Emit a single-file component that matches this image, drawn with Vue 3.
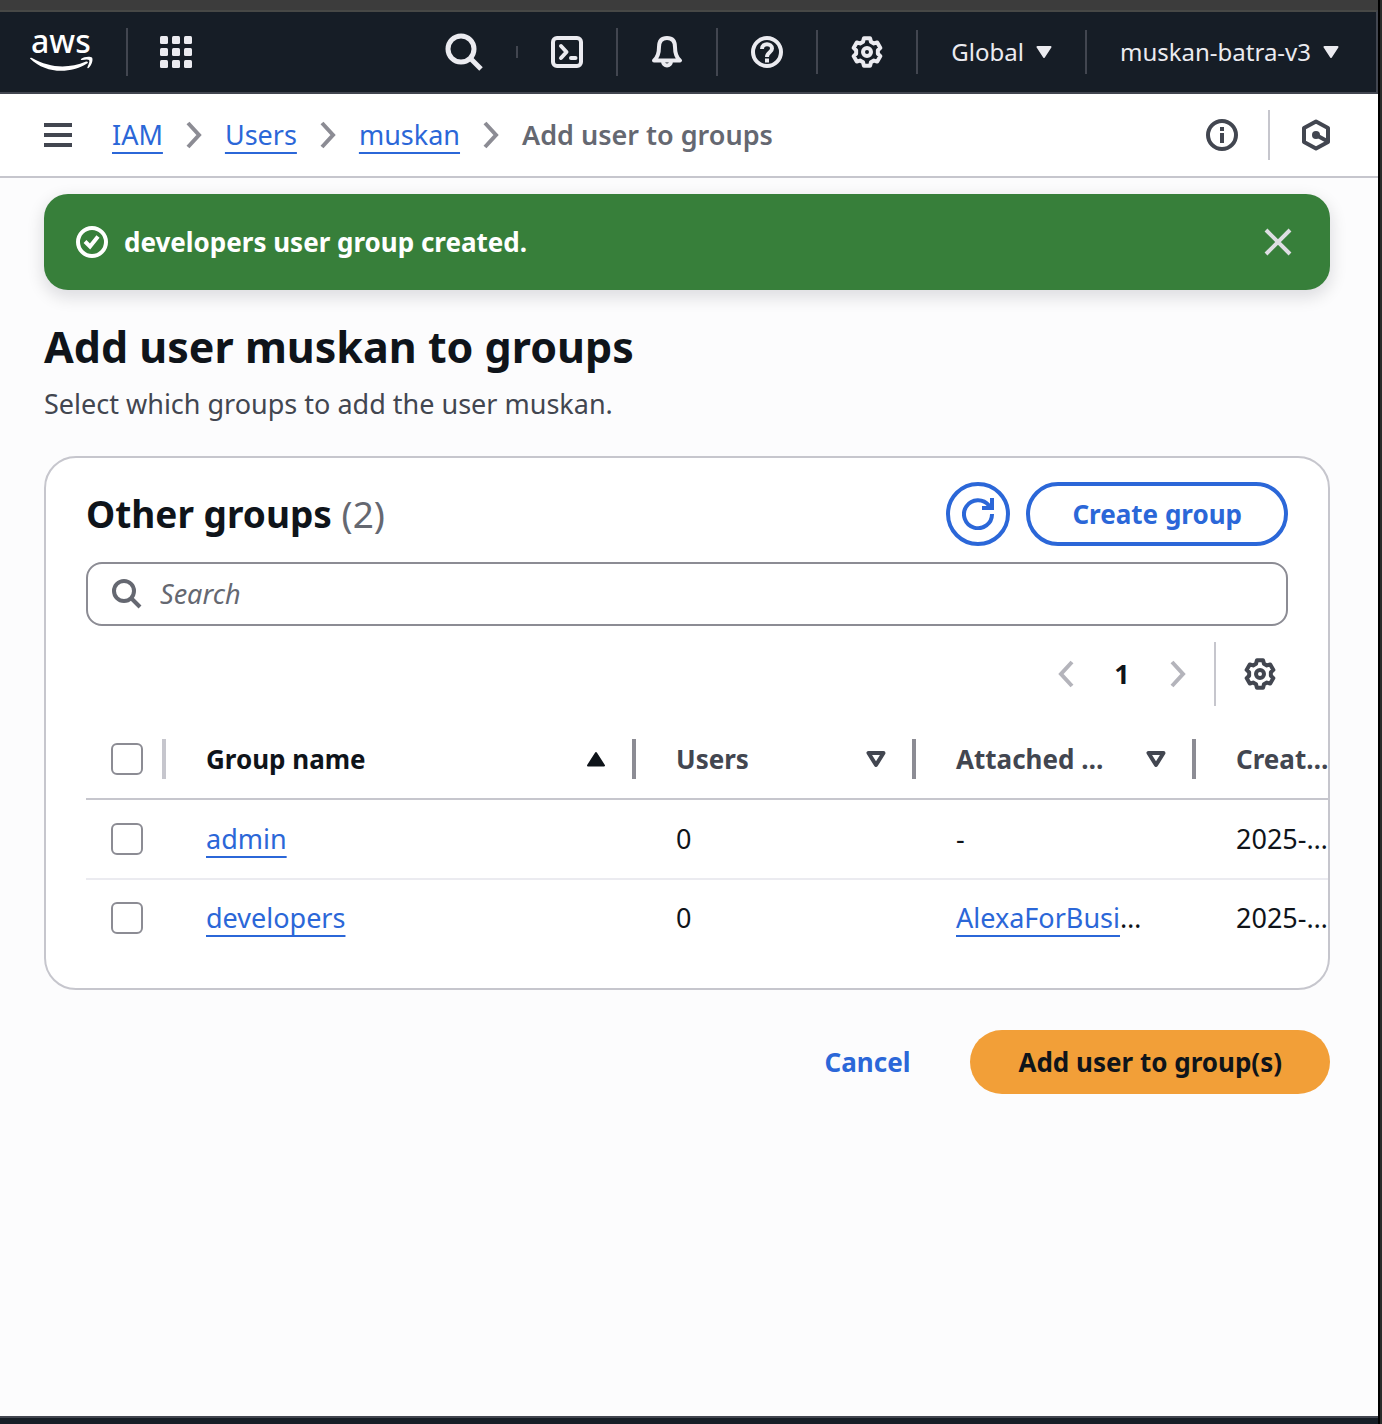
<script setup>
import { ref } from 'vue'

const query = ref('')
const selected = ref([])
const crumbs = ['IAM', 'Users', 'muskan']
const groups = [
  { name: 'admin', users: 0, policy: '', created: '2025-…' },
  { name: 'developers', users: 0, policy: 'AlexaForBusi', created: '2025-…' },
]

// Outline of a six-toothed cog centred on 16,16.
const cog = (() => {
  const points = []
  for (let tooth = 0; tooth < 6; tooth++) {
    const base = tooth * 60 - 90
    for (const [radius, offset] of [[11, -21], [14, -13], [14, 13], [11, 21]]) {
      const angle = ((base + offset) * Math.PI) / 180
      points.push(`${(16 + radius * Math.cos(angle)).toFixed(2)} ${(16 + radius * Math.sin(angle)).toFixed(2)}`)
    }
  }
  return `M${points.join('L')}Z`
})()
</script>

<template>
  <div class="page">
    <header class="topbar">
      <a class="logo" href="#" aria-label="AWS home">
        <svg width="64" height="44" viewBox="0 0 64 44">
          <text x="1" y="23" class="logo-text">aws</text>
          <path d="M0 28.500C0 27.500 1 27.500 2 28C20 38 38 39 56 31.500C58 31 58.500 32.500 57 33.500C40 44 16 44 0 28.500Z" fill="#fff" />
          <path d="M51 29C54 26.500 60 26 62 27.500C63.500 30 61.500 35.500 58.500 38C57.500 38.500 57 38 57.500 37C59 33.500 60 31 59 30C58 29 55 29.500 52 30C51 30 50.500 29.500 51 29Z" fill="#fff" />
        </svg>
      </a>
      <span class="rule tall"></span>
      <button class="icon-btn apps" type="button" aria-label="Services">
        <svg width="32" height="32" viewBox="0 0 32 32" fill="currentColor">
          <template v-for="r in 3" :key="r">
            <rect v-for="c in 3" :key="c" :x="(c - 1) * 12" :y="(r - 1) * 12" width="8" height="8" rx="1.5" />
          </template>
        </svg>
      </button>
      <div class="tools">
        <button class="icon-btn search" type="button" aria-label="Search services">
          <svg width="38" height="38" viewBox="0 0 38 38" fill="none" stroke="currentColor" stroke-width="5">
            <circle cx="16" cy="16" r="13" /><path d="M25 25L36 36" />
          </svg>
        </button>
        <span class="rule short"></span>
        <button class="icon-btn" type="button" aria-label="CloudShell">
          <svg width="32" height="32" viewBox="0 0 32 32" fill="none" stroke="currentColor" stroke-width="4">
            <rect x="2" y="2" width="28" height="28" rx="4" />
            <path d="M10 10L15.500 16L10 22" stroke-linecap="round" stroke-linejoin="round" />
            <path d="M20 22H24.500" stroke-linecap="round" />
          </svg>
        </button>
        <span class="rule tall"></span>
        <button class="icon-btn" type="button" aria-label="Notifications">
          <svg width="32" height="32" viewBox="0 0 32 32" fill="none" stroke="currentColor" stroke-width="4" stroke-linejoin="round">
            <path d="M3 24.500C6 22 8 19 8 11C8 5 11 2 16 2S24 5 24 11C24 19 26 22 29 24.500Z" />
            <path d="M12 25C12 31 20 31 20 25" />
          </svg>
        </button>
        <span class="rule tall"></span>
        <button class="icon-btn" type="button" aria-label="Help">
          <svg width="32" height="32" viewBox="0 0 32 32" fill="none" stroke="currentColor" stroke-width="4">
            <circle cx="16" cy="16" r="14" />
            <path d="M11 13C11 6.500 21 7 21 12.500C21 16.500 16 16 16 21" /><path d="M16 22.500V26.500" />
          </svg>
        </button>
        <span class="rule"></span>
        <button class="icon-btn" type="button" aria-label="Settings">
          <svg width="32" height="32" viewBox="0 0 32 32" fill="none" stroke="currentColor" stroke-width="4" stroke-linejoin="round">
            <path :d="cog" /><circle cx="16" cy="16" r="4" />
          </svg>
        </button>
        <span class="rule"></span>
        <button class="menu-btn" type="button">
          Global
          <svg width="16" height="12" viewBox="0 0 16 12"><path d="M1.500 1H14.500L8 11Z" fill="currentColor" stroke="currentColor" stroke-width="2" stroke-linejoin="round" /></svg>
        </button>
        <span class="rule"></span>
        <button class="menu-btn" type="button">
          muskan-batra-v3
          <svg width="16" height="12" viewBox="0 0 16 12"><path d="M1.500 1H14.500L8 11Z" fill="currentColor" stroke="currentColor" stroke-width="2" stroke-linejoin="round" /></svg>
        </button>
      </div>
    </header>

    <div class="crumb-bar">
      <button class="icon-btn dark" type="button" aria-label="Open navigation">
        <svg width="28" height="24" viewBox="0 0 28 24" fill="currentColor">
          <rect width="28" height="4" /><rect y="10" width="28" height="4" /><rect y="20" width="28" height="4" />
        </svg>
      </button>
      <nav class="crumbs" aria-label="Breadcrumbs">
        <template v-for="crumb in crumbs" :key="crumb">
          <a class="link" href="#">{{ crumb }}</a>
          <svg width="16" height="28" viewBox="0 0 16 28" fill="none" stroke="#8c8c94" stroke-width="4"><path d="M2 2L13 14L2 26" /></svg>
        </template>
        <span class="current" aria-current="page">Add user to groups</span>
      </nav>
      <div class="panel-tools">
        <button class="icon-btn dark" type="button" aria-label="Info">
          <svg width="32" height="32" viewBox="0 0 32 32" fill="none" stroke="currentColor" stroke-width="4">
            <circle cx="16" cy="16" r="14" /><path d="M16 8V12M16 14V24" />
          </svg>
        </button>
        <span class="panel-rule"></span>
        <button class="icon-btn dark" type="button" aria-label="Amazon Q">
          <svg width="32" height="32" viewBox="0 0 32 32" fill="none" stroke="currentColor" stroke-width="4" stroke-linejoin="round">
            <path d="M16 2.500L28 9V23L16 29.500L4 23V9Z" />
            <circle cx="16" cy="16" r="4" fill="currentColor" stroke="none" /><path d="M16 16L27 22" />
          </svg>
        </button>
      </div>
    </div>

    <main class="content">
      <div class="flash" role="status">
        <svg width="32" height="32" viewBox="0 0 32 32" fill="none" stroke="currentColor" stroke-width="4">
          <circle cx="16" cy="16" r="14" /><path d="M9 15.500L14 20.500L22 10.500" />
        </svg>
        <strong class="flash-text">developers user group created.</strong>
        <button class="icon-btn close" type="button" aria-label="Dismiss">
          <svg width="28" height="28" viewBox="0 0 28 28" fill="none" stroke="currentColor" stroke-width="4"><path d="M2 2L26 26M26 2L2 26" /></svg>
        </button>
      </div>

      <h1 class="title">Add user muskan to groups</h1>
      <p class="subtitle">Select which groups to add the user muskan.</p>

      <section class="card">
        <div class="card-head">
          <h2 class="card-title">Other groups <span class="count">(2)</span></h2>
          <button class="btn round" type="button" aria-label="Refresh">
            <svg width="32" height="32" viewBox="0 0 32 32" fill="none" stroke="currentColor" stroke-width="4">
              <path d="M30 16A14 14 0 1 1 27 7.500L29 10" /><path d="M30 0V10H20" />
            </svg>
          </button>
          <button class="btn" type="button">Create group</button>
        </div>

        <label class="search-box">
          <svg width="30" height="30" viewBox="0 0 30 30" fill="none" stroke="currentColor" stroke-width="4">
            <circle cx="12" cy="12" r="10" /><path d="M19 19L28 28" />
          </svg>
          <input v-model="query" class="search-input" type="search" placeholder="Search" aria-label="Search groups" />
        </label>

        <div class="pager">
          <button class="icon-btn muted" type="button" aria-label="Previous page">
            <svg width="16" height="28" viewBox="0 0 16 28" fill="none" stroke="currentColor" stroke-width="4"><path d="M14 2L3 14L14 26" /></svg>
          </button>
          <button class="page-no" type="button" aria-current="page">1</button>
          <button class="icon-btn muted" type="button" aria-label="Next page">
            <svg width="16" height="28" viewBox="0 0 16 28" fill="none" stroke="currentColor" stroke-width="4"><path d="M2 2L13 14L2 26" /></svg>
          </button>
          <span class="pager-rule"></span>
          <button class="icon-btn dark" type="button" aria-label="Preferences">
            <svg width="32" height="32" viewBox="0 0 32 32" fill="none" stroke="currentColor" stroke-width="4" stroke-linejoin="round">
              <path :d="cog" /><circle cx="16" cy="16" r="4" />
            </svg>
          </button>
        </div>

        <div class="table-wrap">
          <table class="table">
            <colgroup><col class="col-check" /><col class="col-name" /><col class="col-mid" /><col class="col-mid" /><col class="col-last" /></colgroup>
            <thead>
              <tr>
                <th class="check"><div class="th-in light"><input type="checkbox" aria-label="Select all groups" /></div></th>
                <th aria-sort="ascending">
                  <div class="th-in sorted">Group name
                    <svg width="20" height="16" viewBox="0 0 20 16"><path d="M2 14.500L10 2L18 14.500Z" fill="currentColor" stroke="currentColor" stroke-width="2" stroke-linejoin="round" /></svg>
                  </div>
                </th>
                <th v-for="label in ['Users', 'Attached …']" :key="label">
                  <div class="th-in">{{ label }}
                    <svg width="20" height="18" viewBox="0 0 20 18"><path d="M2.500 3H17.500L10 15Z" fill="none" stroke="currentColor" stroke-width="4" stroke-linejoin="round" /></svg>
                  </div>
                </th>
                <th><div class="th-in last">Creat…</div></th>
              </tr>
            </thead>
            <tbody>
              <tr v-for="group in groups" :key="group.name">
                <td class="check"><input v-model="selected" type="checkbox" :value="group.name" :aria-label="`Select ${group.name}`" /></td>
                <td><a class="link" href="#">{{ group.name }}</a></td>
                <td>{{ group.users }}</td>
                <td><template v-if="group.policy"><a class="link" href="#">{{ group.policy }}</a>…</template><template v-else>-</template></td>
                <td>{{ group.created }}</td>
              </tr>
            </tbody>
          </table>
        </div>
      </section>

      <div class="actions">
        <button class="cancel" type="button">Cancel</button>
        <button class="primary" type="button">Add user to group(s)</button>
      </div>
    </main>
    <footer class="footer"></footer>
  </div>
</template>

<style>
body {
  margin: 0;
  background: #2a2c2b;
}
</style>

<style scoped>
.page {
  box-sizing: border-box;
  display: flex;
  flex-direction: column;
  min-height: 100vh;
  margin-right: 2px;
  border-right: 2px solid #000;
  background: #fcfcfd;
  color: #0f141a;
  font-family: "Noto Sans", "Open Sans", sans-serif;
  font-size: 27px;
  line-height: 40px;
}
button {
  font: inherit;
  margin: 0;
  cursor: pointer;
}
svg {
  display: block;
  flex: none;
}
.topbar {
  display: flex;
  align-items: center;
  height: 80px;
  padding: 0 37px 0 30px;
  border-top: 2px solid #474846;
  border-bottom: 2px solid #424650;
  border-right: 2px solid #424650;
  box-shadow: 0 -10px #3c3c3c;
  margin-top: 10px;
  background: #161d26;
  color: #ebebf0;
}
.logo svg {
  overflow: visible;
}
.logo-text {
  fill: #fff;
  font-size: 32px;
  font-weight: 500;
}
.rule {
  flex: none;
  width: 2px;
  height: 44px;
  background: #424650;
}
.rule.tall {
  height: 48px;
}
.rule.short {
  height: 12px;
}
.logo + .rule {
  margin: 0 32px;
}
.icon-btn {
  flex: none;
  padding: 0;
  border: 0;
  background: none;
  color: inherit;
}
.tools {
  display: flex;
  align-items: center;
  gap: 33px;
  margin-left: auto;
}
.menu-btn {
  display: flex;
  align-items: center;
  gap: 12px;
  padding: 0;
  border: 0;
  background: none;
  color: inherit;
  font-size: 24px;
}
.dark {
  color: #424650;
}
.muted {
  color: #b4b4bb;
}
.crumb-bar {
  display: flex;
  align-items: center;
  height: 82px;
  padding: 0 46px 0 44px;
  border-bottom: 2px solid #c6c6cd;
  background: #fff;
}
.crumbs {
  display: flex;
  align-items: center;
  gap: 23px;
  margin-left: 40px;
}
.link {
  color: #2b67d8;
  text-decoration: underline;
  text-decoration-thickness: 2px;
  text-underline-offset: 7px;
  text-decoration-skip-ink: none;
}
.current {
  color: #656871;
  font-weight: 600;
}
.panel-tools {
  display: flex;
  align-items: center;
  gap: 30px;
  margin-left: auto;
}
.panel-rule {
  width: 2px;
  height: 50px;
  background: #c6c6cd;
}
.content {
  flex: 1;
  padding: 16px 48px 40px 44px;
}
.flash {
  display: flex;
  align-items: center;
  gap: 16px;
  height: 96px;
  padding: 0 38px 0 32px;
  box-sizing: border-box;
  border-radius: 24px;
  background: #377f3a;
  box-shadow: 0 6px 16px 2px rgb(0 7 22 / 12%);
  color: #fff;
}
.flash-text {
  flex: 1;
  font-size: 26px;
  font-weight: 700;
}
.close {
  color: #dedee3;
}
.title {
  margin: 27px 0 0;
  font-size: 43px;
  font-weight: 700;
  line-height: 60px;
}
.subtitle {
  margin: 7px 0 32px;
  color: #424650;
}
.card {
  padding: 24px 0 32px 40px;
  border: 2px solid #c6c6cd;
  border-radius: 32px;
  background: #fff;
}
.card-head {
  display: flex;
  align-items: center;
  gap: 16px;
  margin-right: 40px;
}
.card-title {
  flex: 1;
  margin: 0;
  font-size: 37px;
  font-weight: 700;
}
.count {
  color: #656871;
  font-weight: 400;
}
.btn {
  box-sizing: border-box;
  height: 64px;
  padding: 0 42px;
  border: 4px solid #2b67d8;
  border-radius: 32px;
  background: #fff;
  color: #2b67d8;
  font-size: 26px;
  font-weight: 700;
}
.btn.round {
  width: 64px;
  padding: 0 12px;
}
.search-box {
  display: flex;
  align-items: center;
  gap: 18px;
  box-sizing: border-box;
  height: 64px;
  margin: 16px 40px 0 0;
  padding: 0 24px;
  border: 2px solid #8c8c94;
  border-radius: 16px;
  color: #656871;
}
.search-input {
  flex: 1;
  min-width: 0;
  padding: 0;
  border: 0;
  outline: 0;
  background: none;
  color: #0f141a;
  font: inherit;
}
.search-input::placeholder {
  color: #656871;
  font-style: italic;
  opacity: 1;
}
.pager {
  display: flex;
  align-items: center;
  justify-content: flex-end;
  margin: 16px 52px 0 0;
}
.page-no {
  width: 96px;
  padding: 0;
  border: 0;
  background: none;
  color: #0f141a;
  font-weight: 700;
}
.pager-rule {
  width: 2px;
  height: 64px;
  margin: 0 28px;
  background: #c6c6cd;
}
.table-wrap {
  margin-top: 14px;
  overflow: hidden;
}
.table {
  width: 100%;
  border-collapse: separate;
  border-spacing: 0;
  table-layout: fixed;
  white-space: nowrap;
}
.col-check {
  width: 80px;
}
.col-mid {
  width: 280px;
}
.col-last {
  width: 132px;
}
th,
td {
  height: 78px;
  padding: 0 0 0 40px;
  border-bottom: 2px solid #c6c6cd;
  text-align: left;
}
td {
  border-color: #ebebf0;
}
tbody tr:last-child td {
  height: 76px;
  border: 0;
}
.check {
  padding-left: 25px;
}
.th-in {
  display: flex;
  align-items: center;
  justify-content: space-between;
  height: 40px;
  padding-right: 26px;
  border-right: 4px solid #8c8c94;
  color: #424650;
  font-size: 26px;
  font-weight: 700;
}
.th-in.light {
  padding-right: 19px;
  border-color: #c6c6cd;
}
.th-in.sorted {
  color: #0f141a;
}
.th-in.last {
  padding: 0;
  border: 0;
}
input[type="checkbox"] {
  display: block;
  flex: none;
  box-sizing: border-box;
  width: 32px;
  height: 32px;
  margin: 0;
  border: 2px solid #8c8c94;
  border-radius: 6px;
  background: #fff;
  appearance: none;
}
input[type="checkbox"]:checked {
  background: #2b67d8;
}
.actions {
  display: flex;
  justify-content: flex-end;
  gap: 16px;
  margin-top: 40px;
}
.cancel,
.primary {
  height: 64px;
  padding: 0 44px;
  border: 0;
  border-radius: 32px;
  background: none;
  color: #2b67d8;
  font-size: 26px;
  font-weight: 700;
}
.primary {
  padding: 0 48px;
  background: #f29f38;
  color: #0f141a;
}
.footer {
  height: 6px;
  border-top: 2px solid #424650;
  background: #161d26;
}
</style>
